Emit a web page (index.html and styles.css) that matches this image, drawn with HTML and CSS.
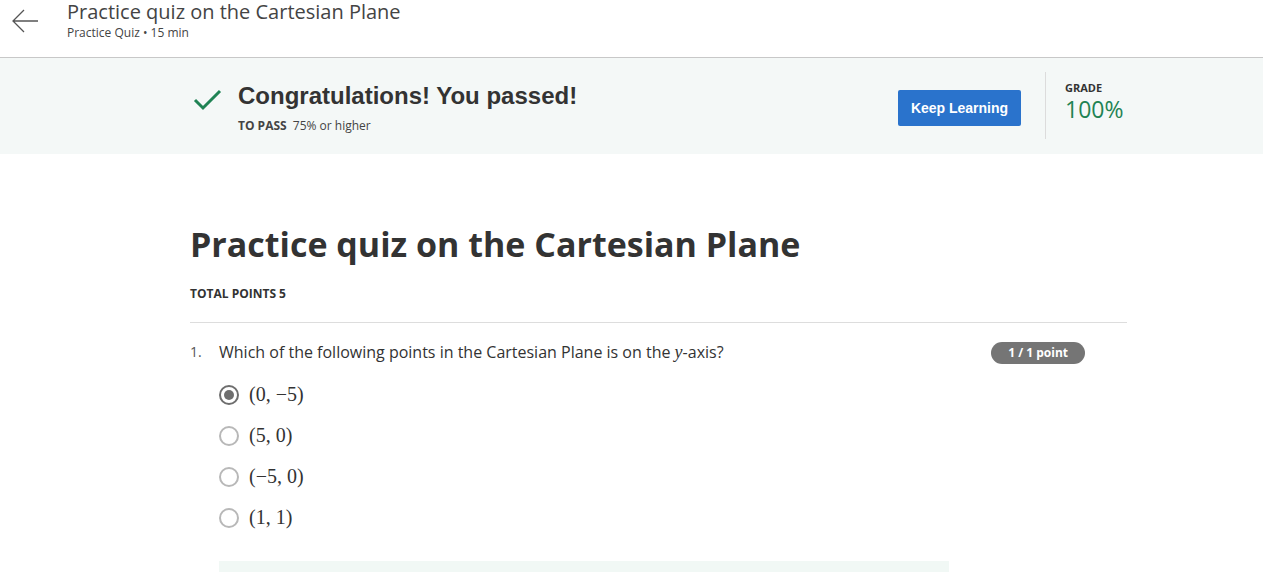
FILE: index.html
```html
<!DOCTYPE html>
<html>
<head>
<meta charset="utf-8">
<link rel="stylesheet" href="styles.css">
</head>
<body>
<header class="topbar">
  <div class="back">
    <svg width="28" height="24" viewBox="0 0 28 24"><path d="M13 1 L2 12 L13 23 M2 12 H27" fill="none" stroke="#555" stroke-width="1.3"/></svg>
  </div>
  <div class="top-text">
    <div class="top-title">Practice quiz on the Cartesian Plane</div>
    <div class="top-sub">Practice Quiz • 15 min</div>
  </div>
</header>
<section class="banner">
  <div class="banner-inner">
    <div class="check">
      <svg width="30" height="24" viewBox="0 0 30 24"><path d="M2 12 L10 20 L27 3" fill="none" stroke="#1f8354" stroke-width="3"/></svg>
    </div>
    <div class="pass">
      <div class="congrats">Congratulations! You passed!</div>
      <div class="topass"><b>TO PASS</b> 75% or higher</div>
    </div>
    <button class="keep">Keep Learning</button>
    <div class="vdiv"></div>
    <div class="grade">
      <div class="grade-label">GRADE</div>
      <div class="grade-val">100%</div>
    </div>
  </div>
</section>
<main class="content">
  <h1 class="quiz-title">Practice quiz on the Cartesian Plane</h1>
  <div class="total">TOTAL POINTS 5</div>
  <hr class="rule">
  <div class="question">
    <div class="qnum">1.</div>
    <div class="qbody">
      <div class="qhead">
        <div class="qtext">Which of the following points in the Cartesian Plane is on the <span class="mi">y</span>-axis?</div>
        <div class="badge">1 / 1 point</div>
      </div>
      <div class="options">
        <div class="opt"><span class="radio checked"></span><span class="math">(0, −5)</span></div>
        <div class="opt"><span class="radio"></span><span class="math">(5, 0)</span></div>
        <div class="opt"><span class="radio"></span><span class="math">(−5, 0)</span></div>
        <div class="opt"><span class="radio"></span><span class="math">(1, 1)</span></div>
      </div>
      <div class="feedback"></div>
    </div>
  </div>
</main>
</body>
</html>
```
FILE: styles.css
```css
* { box-sizing: border-box; }
body { margin: 0; font-family: "Open Sans", sans-serif; color: #333; background: #fff; overflow: hidden; }

.topbar { height: 58px; border-bottom: 1px solid #c8c8c8; display: flex; align-items: flex-start; }
.back { width: 67px; padding: 9px 0 0 11px; }
.top-title { font-size: 20px; line-height: 24px; color: #444; }
.top-sub { font-size: 12px; line-height: 16px; color: #444; margin-top: 1px; }

.banner { background: #f4f8f7; height: 96px; }
.banner-inner { margin-left: 190px; width: 937px; display: flex; align-items: flex-start; height: 100%; }
.check { padding: 30px 0 0 3px; width: 48px; }
.pass { flex: 1; padding-top: 24px; }
.congrats { font-family: "Liberation Sans", Arial, sans-serif; font-weight: bold; font-size: 24px; line-height: 28px; color: #333; }
.topass { font-size: 12px; margin-top: 7px; color: #444; }
.topass b { margin-right: 3px; }
.keep { margin-top: 32px; width: 123px; height: 36px; border: 0; border-radius: 2px; background: #2a73cc; color: #fff; font-family: "Liberation Sans", Arial, sans-serif; font-weight: bold; font-size: 14px; }
.vdiv { width: 1px; height: 67px; background: #dcdcdc; margin: 14px 19px 0 24px; }
.grade { padding-top: 23px; width: 62px; }
.grade-label { font-size: 11px; font-weight: bold; color: #333; line-height: 14px; }
.grade-val { font-size: 23px; color: #1f8354; line-height: 28px; }

.content { margin-left: 190px; width: 937px; }
.quiz-title { font-size: 34px; font-weight: bold; margin: 0; padding-top: 64px; line-height: 52px; color: #333; }
.total { font-size: 12px; font-weight: bold; margin-top: 15px; line-height: 18px; }
.rule { border: 0; border-top: 1px solid #ddd; margin: 19px 0 0; }
.question { display: flex; padding-top: 18px; }
.qnum { width: 29px; font-size: 14px; line-height: 22px; color: #555; }
.qbody { flex: 1; }
.qhead { display: flex; justify-content: space-between; width: 866px; }
.qtext { font-size: 16px; line-height: 22px; color: #333; }
.mi { font-family: "Liberation Serif", serif; font-style: italic; font-size: 18px; }
.badge { margin-top: 1px; height: 22px; padding: 0 17px; border-radius: 11px; background: #757575; color: #fff; font-size: 12px; font-weight: bold; line-height: 22px; }
.options { padding-top: 10px; }
.opt { display: flex; align-items: center; height: 41px; }
.radio { width: 20px; height: 20px; border: 2px solid #b8b8b8; border-radius: 50%; margin-right: 10px; display: flex; align-items: center; justify-content: center; }
.radio.checked { border-color: #6e6e6e; }
.radio.checked::after { content: ""; width: 10px; height: 10px; border-radius: 50%; background: #6e6e6e; }
.math { font-family: "Liberation Serif", serif; font-size: 20px; color: #333; }
.feedback { margin-top: 23px; width: 730px; height: 40px; background: #f1f8f5; }
```
